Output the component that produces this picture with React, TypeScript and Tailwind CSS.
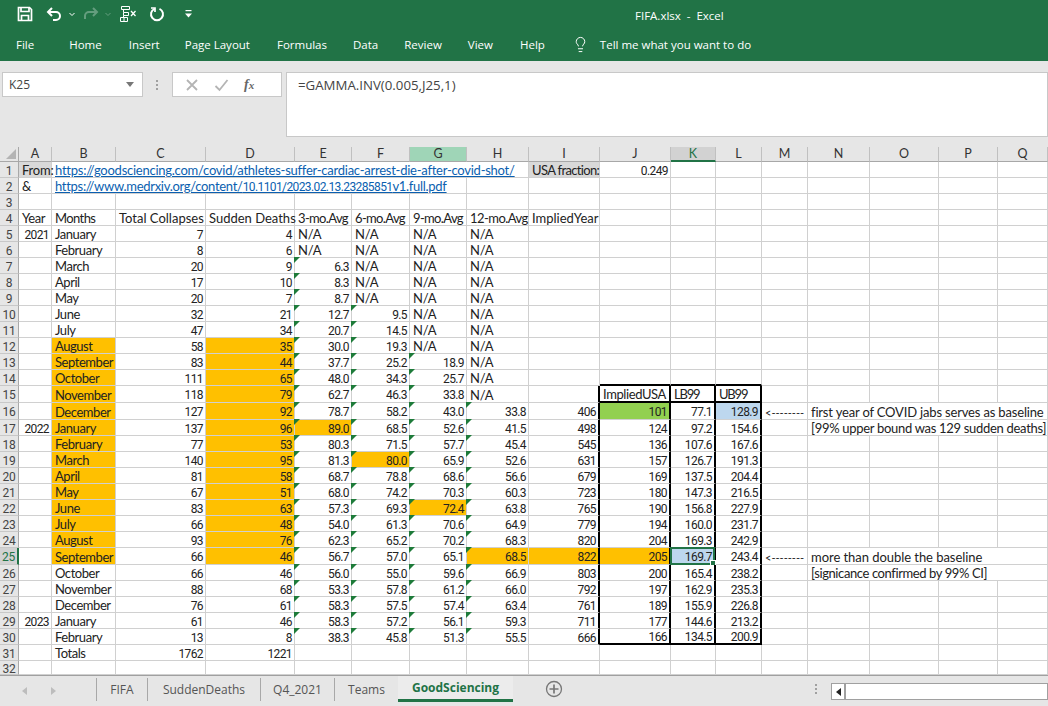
import { Lightbulb } from "lucide-react";
import type { ReactNode } from "react";

const columns = ["A", "B", "C", "D", "E", "F", "G", "H", "I", "J", "K", "L", "M", "N", "O", "P", "Q"];

type DataRow = [string, string, string, string, string, string, string, string, string, string, string, string];

// rows 5 to 30 of the sheet
const data: DataRow[] = [
  ["2021", "January", "7", "4", "N/A", "N/A", "N/A", "N/A", "", "", "", ""],
  ["", "February", "8", "6", "N/A", "N/A", "N/A", "N/A", "", "", "", ""],
  ["", "March", "20", "9", "6.3", "N/A", "N/A", "N/A", "", "", "", ""],
  ["", "April", "17", "10", "8.3", "N/A", "N/A", "N/A", "", "", "", ""],
  ["", "May", "20", "7", "8.7", "N/A", "N/A", "N/A", "", "", "", ""],
  ["", "June", "32", "21", "12.7", "9.5", "N/A", "N/A", "", "", "", ""],
  ["", "July", "47", "34", "20.7", "14.5", "N/A", "N/A", "", "", "", ""],
  ["", "August", "58", "35", "30.0", "19.3", "N/A", "N/A", "", "", "", ""],
  ["", "September", "83", "44", "37.7", "25.2", "18.9", "N/A", "", "", "", ""],
  ["", "October", "111", "65", "48.0", "34.3", "25.7", "N/A", "", "", "", ""],
  ["", "November", "118", "79", "62.7", "46.3", "33.8", "N/A", "", "ImpliedUSA", "LB99", "UB99"],
  ["", "December", "127", "92", "78.7", "58.2", "43.0", "33.8", "406", "101", "77.1", "128.9"],
  ["2022", "January", "137", "96", "89.0", "68.5", "52.6", "41.5", "498", "124", "97.2", "154.6"],
  ["", "February", "77", "53", "80.3", "71.5", "57.7", "45.4", "545", "136", "107.6", "167.6"],
  ["", "March", "140", "95", "81.3", "80.0", "65.9", "52.6", "631", "157", "126.7", "191.3"],
  ["", "April", "81", "58", "68.7", "78.8", "68.6", "56.6", "679", "169", "137.5", "204.4"],
  ["", "May", "67", "51", "68.0", "74.2", "70.3", "60.3", "723", "180", "147.3", "216.5"],
  ["", "June", "83", "63", "57.3", "69.3", "72.4", "63.8", "765", "190", "156.8", "227.9"],
  ["", "July", "66", "48", "54.0", "61.3", "70.6", "64.9", "779", "194", "160.0", "231.7"],
  ["", "August", "93", "76", "62.3", "65.2", "70.2", "68.3", "820", "204", "169.3", "242.9"],
  ["", "September", "66", "46", "56.7", "57.0", "65.1", "68.5", "822", "205", "169.7", "243.4"],
  ["", "October", "66", "46", "56.0", "55.0", "59.6", "66.9", "803", "200", "165.4", "238.2"],
  ["", "November", "88", "68", "53.3", "57.8", "61.2", "66.0", "792", "197", "162.9", "235.3"],
  ["", "December", "76", "61", "58.3", "57.5", "57.4", "63.4", "761", "189", "155.9", "226.8"],
  ["2023", "January", "61", "46", "58.3", "57.2", "56.1", "59.3", "711", "177", "144.6", "213.2"],
  ["", "February", "13", "8", "38.3", "45.8", "51.3", "55.5", "666", "166", "134.5", "200.9"],
];

const notes: Record<number, [string, string, string]> = {
  16: ["<--------", "first year of COVID jabs serves as baseline", "tracking-[-0.17px]"],
  17: ["", "[99% upper bound was 129 sudden deaths]", "tracking-[-0.3px]"],
  25: ["<--------", "more than double the baseline", "tracking-[-0.05px]"],
  26: ["", "[signicance confirmed by 99% CI]", "tracking-[-0.4px]"],
};

const triangleFrom: Record<number, number> = { 4: 7, 5: 10, 6: 13, 7: 16 };

// the reference digits are much narrower than Lato's
const digits = "font-['Roboto',sans-serif] text-[12px] tracking-[-0.6px]";

function Cell({
  children,
  right,
  className = "",
  triangle,
}: {
  children?: ReactNode;
  right?: boolean;
  className?: string;
  triangle?: boolean;
}) {
  return (
    <div
      className={`relative flex items-center whitespace-nowrap border-r border-b border-[#d0d0d0] pt-[2px] ${
        right ? "justify-end pr-[2px]" : "pl-[3px]"
      } ${className}`}
    >
      {triangle && (
        <span className="absolute -left-px -top-px h-0 w-0 border-t-[6px] border-r-[6px] border-t-[#1e7b3a] border-r-transparent" />
      )}
      {children}
    </div>
  );
}

function RowHead({ n }: { n: number }) {
  return (
    <div
      className={`flex items-center justify-center border-b border-[#c8c8c8] pt-[2px] font-['Roboto',sans-serif] text-[12px] tracking-[-0.3px] text-[#444] ${
        n === 25
          ? "border-r-2 border-r-[#217346] bg-[#d2d2d2] text-[#217346]"
          : "border-r border-r-[#a8a8a8] bg-[#e6e6e6]"
      }`}
    >
      {n}
    </div>
  );
}

function fillFor(row: number, col: number) {
  if (col === 1 && row >= 12 && row <= 25) return "bg-[#ffc000]";
  if (col === 3 && row >= 12 && row <= 25) return "bg-[#ffc000]";
  if (col === 4 && row === 17) return "bg-[#ffc000]";
  if (col === 5 && row === 19) return "bg-[#ffc000]";
  if (col === 6 && row === 22) return "bg-[#ffc000]";
  if (row === 25 && col >= 7 && col <= 9) return "bg-[#ffc000]";
  if (col === 9 && row === 16) return "bg-[#92d050]";
  if (col === 11 && row === 16) return "bg-[#bdd7ee]";
  if (col === 10 && row === 25) return "bg-[#bdd7ee]";
  return "";
}

function boxBorders(row: number, col: number) {
  let out = "";
  if (col >= 8 && col <= 11 && row >= 15 && row <= 30) out += " border-r-2 border-r-black";
  if (col >= 9 && col <= 11 && (row === 14 || row === 15 || row === 30)) out += " border-b-2 border-b-black";
  return out;
}

function textStyle(value: string, col: number, isHeader: boolean) {
  if (value === "ImpliedUSA") return "tracking-[-0.4px]";
  if (isHeader) return "tracking-[-1.2px]";
  if (col === 1) return "tracking-[-0.45px]";
  if (value === "N/A") return "tracking-[-0.2px]";
  return digits;
}

function DataCells({ row, values }: { row: number; values: DataRow }) {
  return (
    <>
      {values.map((value, col) => {
        const isHeader = row === 15 && col >= 9;
        const isNumber = col !== 1 && !isHeader && value !== "N/A";
        const triangle = triangleFrom[col] !== undefined && row >= triangleFrom[col];
        return (
          <Cell
            key={col}
            right={isNumber}
            triangle={triangle}
            className={`${fillFor(row, col)}${boxBorders(row, col)} ${textStyle(value, col, isHeader)}`}
          >
            {value}
            {row === 25 && col === 10 && (
              <span className="absolute -left-px -top-px -right-px -bottom-px border-2 border-[#217346]">
                <span className="absolute -bottom-[3px] -right-[3px] h-[6px] w-[6px] border border-white bg-[#217346]" />
              </span>
            )}
          </Cell>
        );
      })}
      {notes[row] ? (
        <>
          <Cell className="text-[11px]">{notes[row][0]}</Cell>
          <Cell className={`col-span-4 ${notes[row][2]}`}>{notes[row][1]}</Cell>
        </>
      ) : (
        <>
          <Cell />
          <Cell />
          <Cell />
          <Cell />
          <Cell />
        </>
      )}
    </>
  );
}

function Blank({ count, start, row }: { count: number; start: number; row: number }) {
  return (
    <>
      {Array.from({ length: count }, (_, i) => (
        <Cell key={i} className={boxBorders(row, start + i)} />
      ))}
    </>
  );
}

function QuickAccess() {
  return (
    <div className="flex items-center pb-[2px] pl-[17px] text-white">
      <svg width="16" height="16" viewBox="0 0 16 16" fill="none" stroke="currentColor" strokeWidth="1.7">
        <path d="M1.5 1.5h11l2 2v11h-13z" />
        <path d="M4 2v3.5h8V2M4.5 14.5V9.5h7v5" />
      </svg>
      <svg className="ml-[13px]" width="16" height="16" viewBox="0 0 16 16" fill="none" stroke="currentColor" strokeWidth="2">
        <path d="M6 2 2 6l4 4M2 6h8a4 4 0 0 1 0 8H7" />
      </svg>
      <svg className="ml-[6px]" width="8" height="8" viewBox="0 0 8 8" fill="none" stroke="currentColor" strokeWidth="1">
        <path d="m1.5 3 2.5 2.5L6.5 3" />
      </svg>
      <svg className="ml-[7px] opacity-30" width="16" height="16" viewBox="0 0 16 16" fill="none" stroke="currentColor" strokeWidth="2">
        <path d="m10 2 4 4-4 4M14 6H6a4 4 0 0 0-4 4v3" />
      </svg>
      <svg className="ml-[5px] opacity-30" width="8" height="8" viewBox="0 0 8 8" fill="none" stroke="currentColor" strokeWidth="1">
        <path d="m1.5 3 2.5 2.5L6.5 3" />
      </svg>
      <svg className="ml-[7px]" width="18" height="18" viewBox="0 0 18 18" fill="none" stroke="currentColor" strokeWidth="1">
        <path d="M2.500 1.500h8v3h-8zM4.500 4.500v3M4.500 7.500h5v3h-5zM4.500 10.500v2M1.500 12.500h7v4h-7zM5 12.500v4" />
        <path d="m12 6 4.500 5M16.500 6 12 11" strokeWidth="1.300" />
      </svg>
      <svg className="ml-[12px]" width="16" height="16" viewBox="0 0 16 16" fill="none" stroke="currentColor" strokeWidth="2">
        <path d="M5.500 2.800a6 6 0 1 0 5 0" />
        <path d="M2 2h4v4" strokeWidth="1.700" />
      </svg>
      <svg className="ml-[19px]" width="9" height="10" viewBox="0 0 9 10" fill="currentColor">
        <rect x="1.500" y="1" width="6" height="1.200" />
        <path d="M1 4.500h7L4.500 8.500z" />
      </svg>
    </div>
  );
}

const ribbonTabs = [
  ["Home", "ml-[35px]"],
  ["Insert", "ml-[27px]"],
  ["Page Layout", "ml-[25px]"],
  ["Formulas", "ml-[27px]"],
  ["Data", "ml-[26px]"],
  ["Review", "ml-[26px]"],
  ["View", "ml-[26px]"],
  ["Help", "ml-[27px]"],
];

function TitleBar() {
  return (
    <div className="h-[61px] shrink-0 bg-[#217346] font-['Open_Sans',sans-serif] text-white">
      <div className="relative flex h-[30px] items-center">
        <QuickAccess />
        <span className="absolute left-[635px] top-[7px] text-[11.5px]">FIFA.xlsx&nbsp; -&nbsp; Excel</span>
      </div>
      <div className="flex h-[31px] items-center pb-[2px] pl-[16px] text-[11.5px]">
        <span>File</span>
        {ribbonTabs.map(([label, margin]) => (
          <span key={label} className={margin}>
            {label}
          </span>
        ))}
        <Lightbulb className="ml-[27px]" size={17} strokeWidth={1.4} />
        <span className="ml-[11px]">Tell me what you want to do</span>
      </div>
    </div>
  );
}

function FormulaBar() {
  return (
    <div className="flex h-[86px] shrink-0 items-start bg-[#e6e6e6] pt-[11px] font-['Open_Sans',sans-serif] text-[12px] text-[#444]">
      <div className="ml-[2px] flex h-[25px] w-[141px] items-center justify-between border border-[#c8c8c8] bg-white pl-[6px] pr-[8px]">
        <span>K25</span>
        <span className="h-0 w-0 border-x-[4px] border-t-[5px] border-x-transparent border-t-[#777]" />
      </div>
      <div className="ml-[13px] flex h-[25px] flex-col justify-center gap-[2px]">
        <span className="h-[2px] w-[2px] bg-[#a0a0a0]" />
        <span className="h-[2px] w-[2px] bg-[#a0a0a0]" />
        <span className="h-[2px] w-[2px] bg-[#a0a0a0]" />
      </div>
      <div className="ml-[14px] flex h-[25px] w-[110px] items-center border border-[#c8c8c8] bg-white">
        <svg className="ml-[12px]" width="14" height="14" viewBox="0 0 14 14" stroke="#b4b4b4" strokeWidth="1.800" fill="none">
          <path d="m2 2 10 10M12 2 2 12" />
        </svg>
        <svg className="ml-[15px]" width="15" height="14" viewBox="0 0 15 14" stroke="#b4b4b4" strokeWidth="1.800" fill="none">
          <path d="m1.500 8 4 4 8-10" />
        </svg>
        <span className="ml-[15px] font-['Liberation_Serif',serif] text-[14px] font-bold italic text-[#666]">
          f<span className="text-[11px]">x</span>
        </span>
      </div>
      <div className="ml-[4px] h-[65px] flex-1 border border-[#c8c8c8] bg-white pl-[11px] pt-[3px] text-[13.25px]">
        =GAMMA.INV(0.005,J25,1)
      </div>
    </div>
  );
}

function SheetGrid() {
  return (
    <div className="grid h-[528px] shrink-0 grid-cols-[19px_33px_64px_90px_89px_57px_58px_57px_62px_71px_71px_45px_46px_46px_62px_69px_59px_50px] grid-rows-[15px_repeat(14,16px)_17px_17px_repeat(8,16px)_17px_repeat(6,16px)_14px] overflow-hidden bg-white font-['Lato',sans-serif] text-[13px] leading-none text-[#222]">
      <div className="relative border-r border-b border-[#a8a8a8] bg-[#e6e6e6]">
        <span className="absolute bottom-[2px] right-[2px] h-0 w-0 border-b-[10px] border-l-[10px] border-b-[#b4b4b4] border-l-transparent" />
      </div>
      {columns.map((c) => (
        <div
          key={c}
          className={`flex items-center justify-center border-r border-[#c0c0c0] pt-px text-[12.5px] ${
            c === "K"
              ? "border-b-2 border-b-[#217346] bg-[#d2d2d2] text-[#217346]"
              : c === "G"
                ? "border-b border-b-[#a8a8a8] bg-[#9fd5b7] text-[#333]"
                : "border-b border-b-[#a8a8a8] bg-[#e6e6e6] text-[#333]"
          }`}
        >
          {c}
        </div>
      ))}

      <RowHead n={1} />
      <Cell className="bg-[#d9d9d9] tracking-[-0.2px]">From:</Cell>
      <Cell className="col-span-7 tracking-[-0.25px] text-[#0b5fb0] underline">
        https://goodsciencing.com/covid/athletes-suffer-cardiac-arrest-die-after-covid-shot/
      </Cell>
      <Cell className="bg-[#d9d9d9] tracking-[-0.65px]">USA fraction:</Cell>
      <Cell right className={digits}>
        0.249
      </Cell>
      <Blank count={7} start={10} row={1} />

      <RowHead n={2} />
      <Cell>&amp;</Cell>
      <Cell className="col-span-6 tracking-[-0.3px] text-[#0b5fb0] underline">
        https://www.medrxiv.org/content/<span className={digits}>10.1101/2023.02.13.23285851</span>v1.full.pdf
      </Cell>
      <Blank count={10} start={7} row={2} />

      <RowHead n={3} />
      <Blank count={17} start={0} row={3} />

      <RowHead n={4} />
      <Cell className="tracking-[-0.4px]">Year</Cell>
      <Cell className="tracking-[-0.6px]">Months</Cell>
      <Cell>Total Collapses</Cell>
      <Cell>Sudden Deaths</Cell>
      <Cell className="tracking-[-0.65px]">3-mo.Avg</Cell>
      <Cell className="tracking-[-0.65px]">6-mo.Avg</Cell>
      <Cell className="tracking-[-0.65px]">9-mo.Avg</Cell>
      <Cell className="tracking-[-0.55px]">12-mo.Avg</Cell>
      <Cell>ImpliedYear</Cell>
      <Blank count={8} start={9} row={4} />

      {data.map((values, i) => (
        <div key={i} className="contents">
          <RowHead n={i + 5} />
          <DataCells row={i + 5} values={values} />
        </div>
      ))}

      <RowHead n={31} />
      <Cell />
      <Cell className="tracking-[-0.45px]">Totals</Cell>
      <Cell right className={digits}>
        1762
      </Cell>
      <Cell right className={digits}>
        1221
      </Cell>
      <Blank count={13} start={4} row={31} />

      <RowHead n={32} />
      <Blank count={17} start={0} row={32} />
    </div>
  );
}

const sheetTabs = [
  ["FIFA", "w-[51px]"],
  ["SuddenDeaths", "w-[113px]"],
  ["Q4_2021", "w-[74px]"],
  ["Teams", "w-[64px]"],
];

function SheetTabs() {
  return (
    <div className="flex h-[31px] shrink-0 items-stretch border-t border-[#a0a0a0] bg-[#e6e6e6] font-['Open_Sans',sans-serif] text-[12px] text-[#555]">
      <div className="flex w-[96px] items-center pl-[22px] text-[#bdbdbd]">
        <span className="h-0 w-0 border-y-[4px] border-r-[5px] border-y-transparent border-r-current" />
        <span className="ml-[24px] h-0 w-0 border-y-[4px] border-l-[5px] border-y-transparent border-l-current" />
      </div>
      {sheetTabs.map(([label, width]) => (
        <div key={label} className={`mb-[5px] mt-[2px] flex items-center justify-center border-l border-[#a8a8a8] ${width}`}>
          {label}
        </div>
      ))}
      <div className="mb-[4px] flex w-[115px] items-center justify-center border-b-[3px] border-[#217346] bg-[#ececec] font-bold text-[#217346]">
        GoodSciencing
      </div>
      <div className="ml-[32px] flex items-center pb-[5px]">
        <svg width="18" height="18" viewBox="0 0 18 18" fill="none" stroke="#777" strokeWidth="1.300">
          <circle cx="9" cy="9" r="7.500" />
          <path d="M9 4.500v9M4.500 9h9" strokeWidth="1.700" />
        </svg>
      </div>
      <div className="ml-[252px] flex flex-col justify-center gap-[2px] pb-[5px]">
        <span className="h-[2px] w-[2px] bg-[#a0a0a0]" />
        <span className="h-[2px] w-[2px] bg-[#a0a0a0]" />
        <span className="h-[2px] w-[2px] bg-[#a0a0a0]" />
      </div>
      <div className="ml-[14px] mb-[6px] mt-[7px] flex flex-1 border border-[#a0a0a0] bg-white">
        <div className="flex w-[14px] items-center justify-center border-r-2 border-[#a0a0a0]">
          <span className="h-0 w-0 border-y-[4px] border-r-[5px] border-y-transparent border-r-[#222]" />
        </div>
      </div>
    </div>
  );
}

export default function App() {
  return (
    <div className="flex h-[706px] w-[1048px] flex-col overflow-hidden bg-[#e6e6e6]">
      <TitleBar />
      <FormulaBar />
      <SheetGrid />
      <SheetTabs />
    </div>
  );
}
